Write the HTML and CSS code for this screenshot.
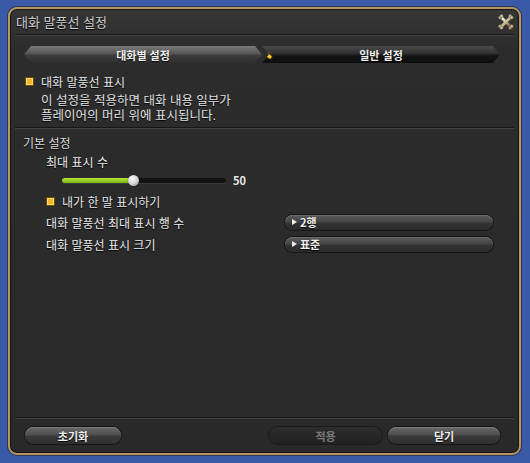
FILE: index.html
```html
<!DOCTYPE html>
<html lang="ko">
<head>
<meta charset="utf-8">
<link rel="stylesheet" href="styles.css">
</head>
<body>
<div class="window">
  <div class="titlebar">
    <span class="title">대화 말풍선 설정</span>
    <svg class="close" width="18" height="18" viewBox="0 0 18 18">
      <defs>
        <linearGradient id="cg" x1="0" y1="0" x2="1" y2="1">
          <stop offset="0" stop-color="#fbf7ea"/>
          <stop offset="0.55" stop-color="#c4b38e"/>
          <stop offset="1" stop-color="#75643f"/>
        </linearGradient>
      </defs>
      <g fill="url(#cg)" stroke="#2b2417" stroke-width="0.5">
        <path d="M4.5 6.2 L7.3 9 L4.5 11.8 L6.2 13.5 L9 10.7 L11.8 13.5 L13.5 11.8 L10.7 9 L13.5 6.2 L11.8 4.5 L9 7.3 L6.2 4.5 Z"/>
        <circle cx="3.2" cy="4.6" r="1.9"/>
        <circle cx="4.6" cy="3.2" r="1.9"/>
        <circle cx="13.4" cy="3.2" r="1.9"/>
        <circle cx="14.8" cy="4.6" r="1.9"/>
        <circle cx="3.2" cy="13.4" r="1.9"/>
        <circle cx="4.6" cy="14.8" r="1.9"/>
        <circle cx="13.4" cy="14.8" r="1.9"/>
        <circle cx="14.8" cy="13.4" r="1.9"/>
      </g>
      <path d="M5 5 L13 13 M13 5 L5 13" stroke="url(#cg)" stroke-width="2.6"/>
    </svg>
  </div>
  <div class="sep"></div>
  <div class="tabs">
    <div class="tab tab-left">대화별 설정</div>
    <div class="tab tab-right"><span class="mark"></span>일반 설정</div>
  </div>

  <div class="row check-row top-check">
    <span class="check"></span><span class="label">대화 말풍선 표시</span>
  </div>
  <div class="desc">
    <div class="desc-line">이 설정을 적용하면 대화 내용 일부가</div>
    <div class="desc-line">플레이어의 머리 위에 표시됩니다.</div>
  </div>
  <div class="sep sep-mid"></div>

  <div class="section-title">기본 설정</div>
  <div class="sub-label">최대 표시 수</div>
  <div class="slider-row">
    <div class="track"><div class="fill" style="width:71px"></div><div class="knob"></div></div>
    <span class="value">50</span>
  </div>
  <div class="row check-row inner-check">
    <span class="check"></span><span class="label">내가 한 말 표시하기</span>
  </div>
  <div class="opt-row">
    <span class="opt-label">대화 말풍선 최대 표시 행 수</span>
    <div class="dropdown"><span class="tri"></span>2행</div>
  </div>
  <div class="opt-row">
    <span class="opt-label">대화 말풍선 표시 크기</span>
    <div class="dropdown"><span class="tri"></span>표준</div>
  </div>

  <div class="spacer"></div>
  <div class="sep sep-bottom"></div>
  <div class="buttons">
    <div class="btn btn-reset">초기화</div>
    <div class="btn-gap"></div>
    <div class="btn btn-apply disabled">적용</div>
    <div class="btn btn-close">닫기</div>
  </div>
</div>
</body>
</html>
```

FILE: styles.css
```css
* { box-sizing: border-box; }
html, body { margin: 0; padding: 0; }
body {
  width: 530px;
  height: 463px;
  background: #3a5aa7;
  font-family: "Noto Sans CJK KR", "Noto Sans", sans-serif;
  color: #e6e6e6;
  overflow: hidden;
}
.window {
  margin: 7px 0 0 8px;
  width: 513px;
  height: 448px;
  border: 2px solid #b39662;
  border-radius: 9px;
  background: linear-gradient(#363636 0px, #2c2c2c 40px, #292929 100%);
  box-shadow: inset 0 0 0 1px #141414, 0 0 0 1px #2a3550;
  display: flex;
  flex-direction: column;
  overflow: hidden;
}
.titlebar {
  height: 25px;
  display: flex;
  align-items: center;
  justify-content: space-between;
  padding: 0 4px 0 6px;
}
.title {
  font-size: 13px;
  color: #cfcfcf;
  text-shadow: 0 1px 1px #000;
}
.close { margin-top: 1px; }
.sep {
  margin: 0 5px;
  height: 2px;
  border-top: 1px solid #161616;
  border-bottom: 1px solid #444;
  flex: none;
}
.tabs {
  margin: 10px 0 0 14px;
  display: flex;
  height: 17px;
  width: 476px;
}
.tab {
  width: 238px;
  height: 17px;
  display: flex;
  align-items: center;
  justify-content: center;
  font-size: 11px;
  font-weight: bold;
  color: #f2f2f2;
  text-shadow: 0 1px 1px #000;
  position: relative;
}
.tab-left {
  background: linear-gradient(#7a7a7a, #555 45%, #3c3c3c 55%, #2e2e2e);
  clip-path: polygon(7px 0, calc(100% - 7px) 0, 100% 50%, calc(100% - 7px) 100%, 7px 100%, 0 50%);
}
.tab-right {
  background: linear-gradient(#4a4a4a, #333 40%, #141414 60%, #0e0e0e);
  clip-path: polygon(0 0, calc(100% - 7px) 0, 100% 50%, calc(100% - 7px) 100%, 0 100%, 7px 50%);
}
.mark {
  position: absolute;
  left: 2px;
  top: 8px;
  width: 8px;
  height: 3px;
  background: #ffcc30;
  border-radius: 2px;
  transform: rotate(35deg);
  box-shadow: 0 0 2px #f0a000;
}
.row { display: flex; align-items: center; }
.check {
  width: 9px;
  height: 9px;
  background: #f1b52a;
  border: 1px solid #6b4a10;
  box-shadow: inset 0 0 0 1px #ffd868;
  flex: none;
}
.label {
  font-size: 12px;
  margin-left: 7px;
  color: #e8e8e8;
  text-shadow: 0 1px 1px #000;
}
.top-check { margin: 10px 0 0 15px; height: 16px; }
.desc {
  margin: 5px 0 0 31px;
  font-family: "Liberation Sans", "Noto Sans CJK KR", sans-serif;
  font-size: 12.5px;
  color: #e2e2e2;
  text-shadow: 0 1px 1px #000;
}
.desc-line { height: 15px; line-height: 15px; white-space: nowrap; }
.sep-mid { margin-top: 3px; }
.section-title {
  margin: 6px 0 0 13px;
  font-size: 12px;
  line-height: 16px;
  color: #dcdcdc;
  text-shadow: 0 1px 1px #000;
}
.sub-label {
  margin: 3px 0 0 36px;
  font-size: 12px;
  line-height: 16px;
  color: #ececec;
  text-shadow: 0 1px 1px #000;
}
.slider-row {
  margin: 3px 0 0 52px;
  height: 14px;
  display: flex;
  align-items: center;
}
.track {
  position: relative;
  width: 164px;
  height: 5px;
  background: #121212;
  border-radius: 3px;
  box-shadow: 0 1px 0 #3c3c3c;
}
.fill {
  height: 5px;
  border-radius: 3px;
  background: linear-gradient(#b6e83a, #7cb412);
}
.knob {
  position: absolute;
  left: 66px;
  top: -3px;
  width: 11px;
  height: 11px;
  border-radius: 50%;
  background: radial-gradient(circle at 40% 35%, #ffffff, #cfcfcf 55%, #8a8a8a);
  box-shadow: 0 0 1px #000;
}
.value {
  margin-left: 7px;
  font-size: 11px;
  font-weight: bold;
  color: #e8e8e8;
}
.inner-check { margin: 6px 0 0 36px; height: 16px; }
.opt-row {
  margin: 5px 0 0 36px;
  height: 16px;
  display: flex;
  align-items: center;
}
.opt-row + .opt-row { margin-top: 6px; }
.opt-label {
  width: 239px;
  font-size: 12px;
  color: #ececec;
  text-shadow: 0 1px 1px #000;
}
.dropdown {
  width: 208px;
  height: 15px;
  border-radius: 8px;
  background: linear-gradient(#5a5a5a, #454545 45%, #333 55%, #2a2a2a);
  box-shadow: 0 0 0 1px #151515, inset 0 1px 0 #6a6a6a;
  display: flex;
  align-items: center;
  padding-left: 7px;
  font-size: 11px;
  font-weight: bold;
  color: #f0f0f0;
  text-shadow: 0 1px 1px #000;
}
.tri {
  width: 0;
  height: 0;
  border-left: 5px solid #eee;
  border-top: 3px solid transparent;
  border-bottom: 3px solid transparent;
  margin-right: 3px;
}
.spacer { flex: 1; }
.sep-bottom { margin-bottom: 8px; }
.buttons {
  display: flex;
  align-items: center;
  padding: 0 19px 0 15px;
  height: 17px;
  margin-bottom: 9px;
}
.btn {
  height: 17px;
  border-radius: 9px;
  display: flex;
  align-items: center;
  justify-content: center;
  font-size: 11px;
  font-weight: bold;
  color: #f2f2f2;
  text-shadow: 0 1px 1px #000;
  background: linear-gradient(#6a6a6a, #4e4e4e 45%, #3a3a3a 55%, #303030);
  box-shadow: 0 0 0 1px #141414, inset 0 1px 0 #7a7a7a;
}
.btn-reset { width: 96px; }
.btn-gap { flex: 1; }
.btn-apply { width: 113px; margin-right: 6px; }
.btn-close { width: 112px; }
.disabled {
  background: linear-gradient(#2c2c2c, #222);
  box-shadow: 0 0 0 1px #1a1a1a;
  color: #7a7a7a;
  text-shadow: none;
}
```
